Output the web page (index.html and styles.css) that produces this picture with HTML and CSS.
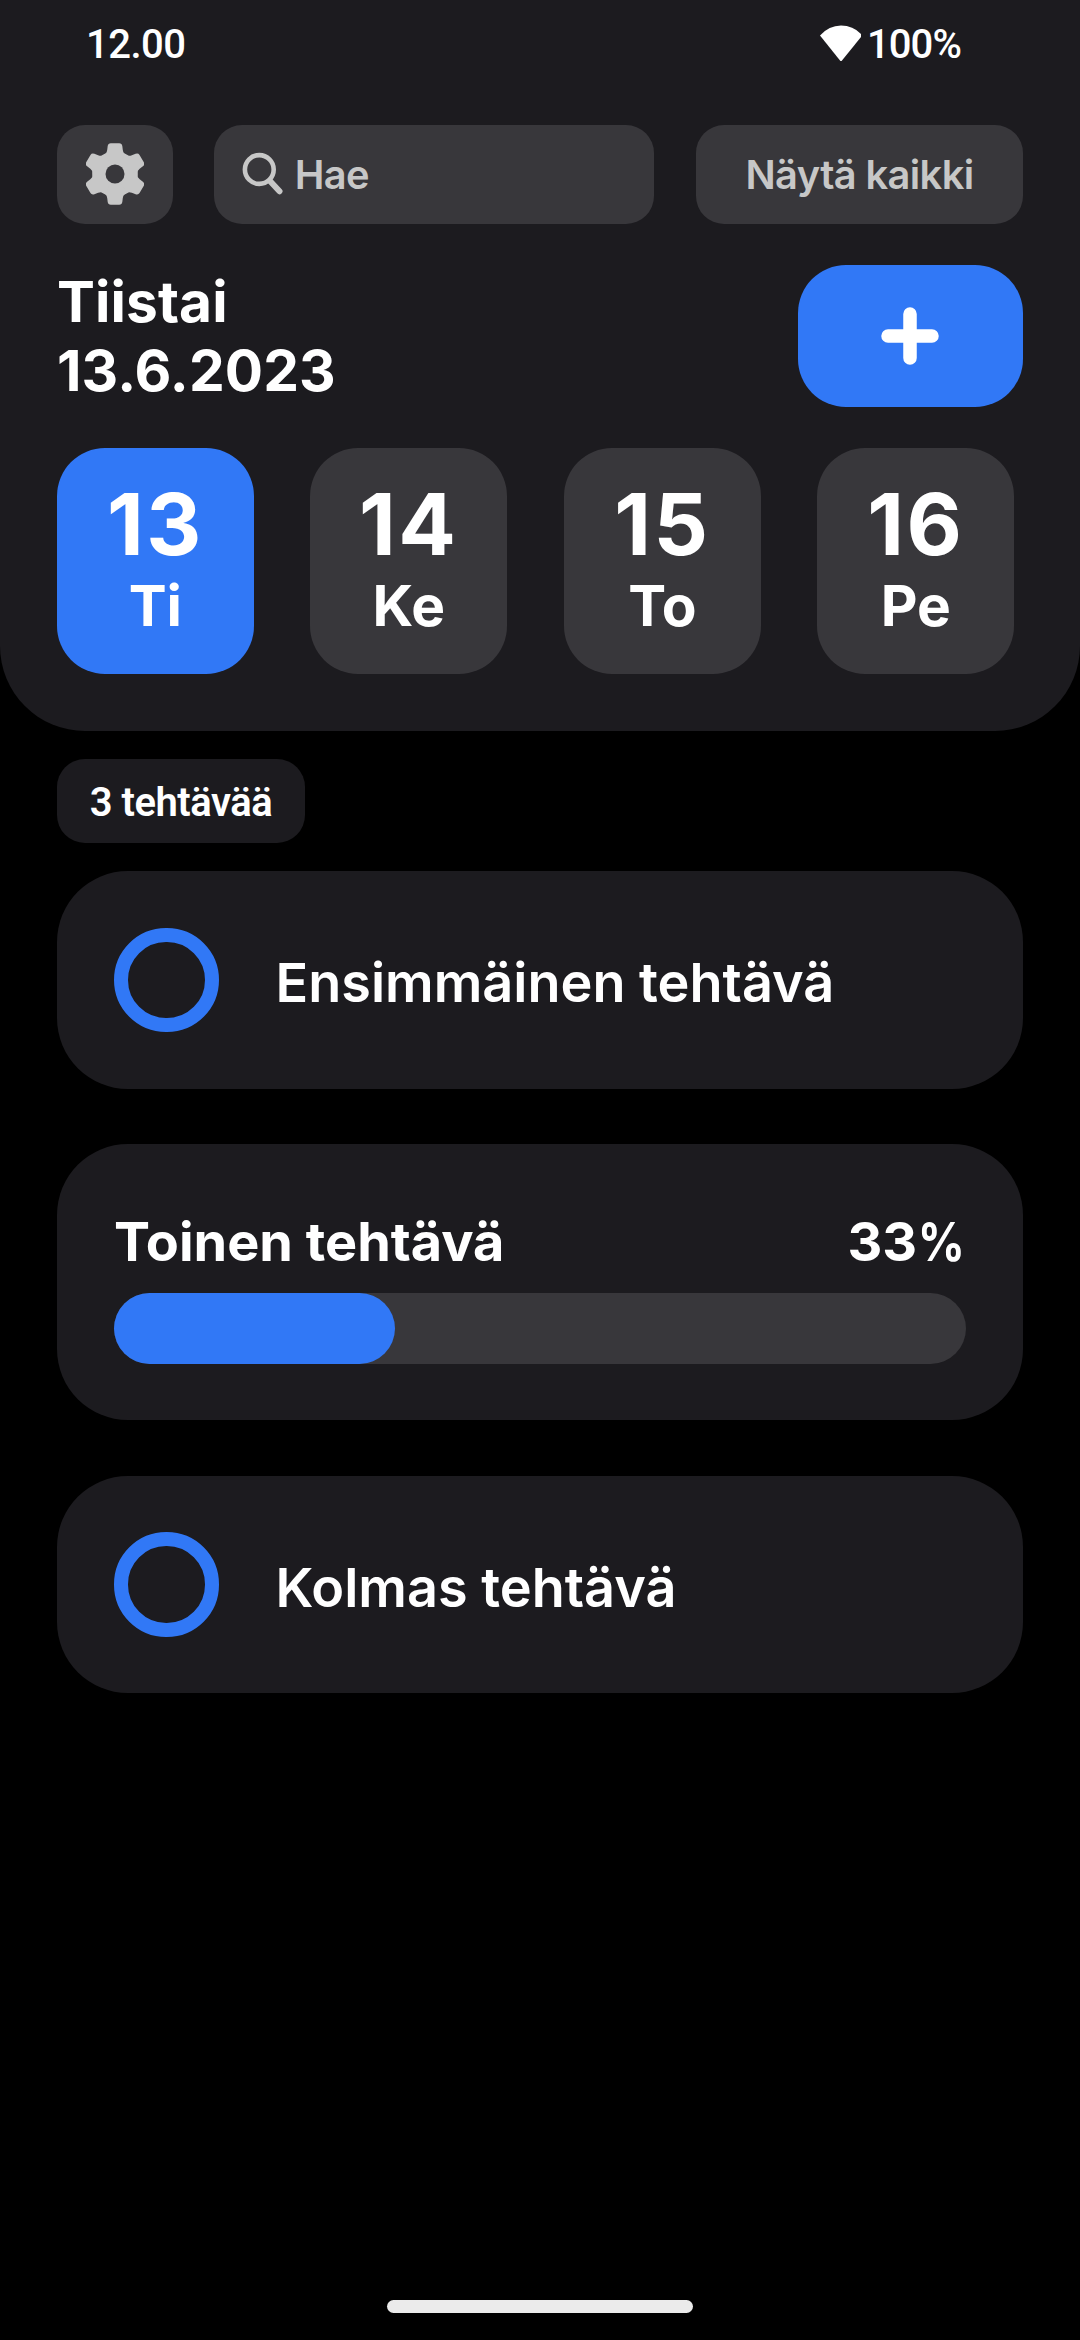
FILE: index.html
```html
<!DOCTYPE html>
<html lang="fi">
<head>
<meta charset="utf-8">
<title>Tehtävät</title>
<link rel="stylesheet" href="styles.css">
</head>
<body>
<div class="app">
  <header class="header">
    <div class="status">
      <span>12.00</span>
      <span class="status-right">
        <svg class="wifi" width="41" height="36" viewBox="0 0 41 36"><path d="M0 10.500Q9 0.500 21 0.500Q33 0.500 41 9V12L22 35.500Q21 36.500 20 35.500Z" fill="#fff"/></svg>
        <span class="battery">100%</span>
      </span>
    </div>
    <div class="toolbar">
      <button class="tool settings" aria-label="Asetukset">
        <svg width="58" height="62" viewBox="-29 -31 58 62">
          <g fill="#c7c7c7">
            <circle r="22.800"/>
            <path id="tooth" d="M-12 -18.500Q-8.300 -20 -7.800 -24L-7.300 -28Q-6.800 -30.800 -4.300 -30.800H4.300Q6.800 -30.800 7.300 -28L7.800 -24Q8.300 -20 12 -18.500L0 0Z"/>
            <use href="#tooth" transform="rotate(60)"/><use href="#tooth" transform="rotate(120)"/><use href="#tooth" transform="rotate(180)"/><use href="#tooth" transform="rotate(240)"/><use href="#tooth" transform="rotate(300)"/>
          </g>
          <circle r="9.500" fill="#38373b"/>
        </svg>
      </button>
      <div class="tool search">
        <svg width="41" height="44" viewBox="0 0 41 44" fill="none" stroke="#c7c7c7" stroke-linecap="round"><circle cx="17.300" cy="18.500" r="14.400" stroke-width="4.600"/><path d="M28 30L37.500 40.200" stroke-width="6"/></svg>
        <span>Hae</span>
      </div>
      <button class="tool show-all">Näytä kaikki</button>
    </div>
    <div class="title-row">
      <h1 class="title">Tiistai<br>13.6.2023</h1>
      <button class="add" aria-label="Lisää">
        <svg width="58" height="58" viewBox="0 0 58 58" stroke="#fff" stroke-width="13.500" stroke-linecap="round"><path d="M29 7V51M7 29H51"/></svg>
      </button>
    </div>
    <div class="days">
      <div class="day active"><span class="num">13</span><span class="name">Ti</span></div>
      <div class="day"><span class="num">14</span><span class="name">Ke</span></div>
      <div class="day"><span class="num">15</span><span class="name">To</span></div>
      <div class="day"><span class="num">16</span><span class="name">Pe</span></div>
    </div>
  </header>
  <main class="tasks">
    <div class="count">3 tehtävää</div>
    <div class="card simple"><span class="ring"></span><span class="task">Ensimmäinen tehtävä</span></div>
    <div class="card progress">
      <div class="progress-head"><span>Toinen tehtävä</span><span class="value">33<span class="unit">%</span></span></div>
      <div class="bar"><div class="fill" style="width: 33%"></div></div>
    </div>
    <div class="card simple"><span class="ring"></span><span class="task">Kolmas tehtävä</span></div>
  </main>
  <div class="home"></div>
</div>
</body>
</html>
```
FILE: styles.css
```css
* { box-sizing: border-box; }
body { margin: 0; background: #000; color: #fff; font-family: Inter, "Liberation Sans", sans-serif; }
button { border: 0; padding: 0; font: inherit; color: inherit; }
svg { display: block; flex: none; }
.app { width: 1080px; height: 2340px; display: flex; flex-direction: column; overflow: hidden; }

.header { height: 730.5px; flex: none; padding: 0 57px; background: #1c1b1f; border-radius: 0 0 85px 85px; }
.status { height: 124.5px; padding: 21px 62px 0 29px; display: flex; justify-content: space-between; align-items: flex-start; font: 500 40px/47px Roboto, sans-serif; letter-spacing: -0.5px; }
.status-right { display: flex; gap: 6px; }
.battery { letter-spacing: -0.9px; }
.wifi { margin-top: 4px; }
.toolbar { display: grid; grid-template-columns: 115.5px 440px 327px; justify-content: space-between; height: 99px; }
.tool { background: #38373b; border-radius: 28px; color: #c7c7c7; font-weight: 600; font-size: 39.8px; line-height: 48px; letter-spacing: -0.6px; display: flex; align-items: center; justify-content: center; }
.search { justify-content: flex-start; padding-left: 28px; gap: 11.5px; padding-top: 2px; }
.search svg { margin-top: -4px; }
.show-all { padding-top: 2px; }
.title-row { margin-top: 41.5px; height: 141.5px; display: flex; justify-content: space-between; }
.title { margin: 2px 0 0; font-size: 56.8px; line-height: 69px; font-weight: 700; letter-spacing: 0.1px; }
.add { width: 225.5px; background: #3178f6; border-radius: 48px; display: flex; align-items: center; justify-content: center; }
.days { margin-top: 41.5px; display: flex; gap: 56.8px; }
.day { width: 196.7px; height: 225.5px; padding-top: 24px; border-radius: 48px; background: #38373b; display: flex; flex-direction: column; align-items: center; font-weight: 700; }
.day.active { background: #3178f6; }
.num { font-size: 85.3px; line-height: 104px; letter-spacing: 2.5px; }
.name { font-size: 56.8px; line-height: 60px; }

.tasks { padding: 28.5px 57px 0; flex: 1; }
.count { width: 248px; height: 84px; margin-bottom: 28px; background: #1c1b1f; border-radius: 28px; font: 600 40px/87px Roboto, sans-serif; letter-spacing: -0.5px; text-align: center; }
.card { background: #1c1b1f; border-radius: 71px; padding: 0 57px; margin-bottom: 55.5px; font-size: 54px; font-weight: 600; }
.simple { height: 217.5px; display: flex; align-items: center; gap: 57px; }
.ring { width: 104.5px; height: 104.5px; border: 14px solid #3178f6; border-radius: 50%; }
.task { line-height: 66px; padding-top: 7px; }
.progress { height: 276px; padding-top: 65px; }
.progress-head { display: flex; justify-content: space-between; line-height: 66px; font-weight: 700; }
.value { margin-right: 1px; }
.unit { display: inline-block; margin-left: -7px; transform: scaleX(0.86); transform-origin: right; }
.bar { margin-top: 17.5px; height: 71px; border-radius: 36px; background: #38373b; }
.fill { height: 100%; border-radius: 36px; background: #3178f6; }
.home { width: 306px; height: 12.5px; flex: none; margin: 0 auto 27.5px; border-radius: 7px; background: #ebebeb; }
```
